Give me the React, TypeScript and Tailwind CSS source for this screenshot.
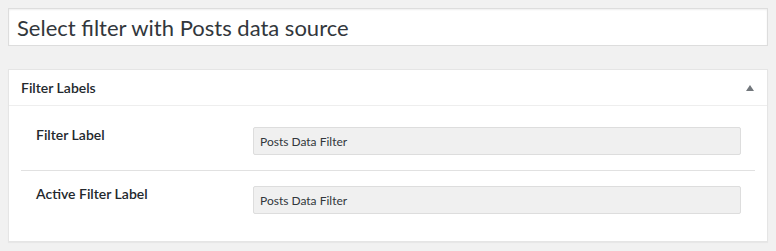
const rows = [
  { label: 'Filter Label', value: 'Posts Data Filter' },
  { label: 'Active Filter Label', value: 'Posts Data Filter' },
];

export default function App() {
  return (
    <div className="w-[776px] h-[251px] bg-[#f1f1f1] px-2 pt-2 font-['Lato',sans-serif] text-[#23282d] overflow-hidden">
      <input
        readOnly
        value="Select filter with Posts data source"
        className="block w-[760px] h-[38px] border border-[#ddd] bg-white px-2 text-[22px] text-[#32373c] outline-none shadow-[inset_0_1px_2px_rgba(0,0,0,0.07)]"
      />

      <div className="mt-[23px] w-[760px] border border-[#e5e5e5] bg-white shadow-[0_1px_1px_rgba(0,0,0,0.04)]">
        <div className="flex items-center justify-between h-[36px] px-3 border-b border-[#eee]">
          <span className="text-[14px] font-semibold">Filter Labels</span>
          <svg width="8" height="6" viewBox="0 0 8 6" className="mr-[1px]">
            <path d="M4 0 L8 6 L0 6 Z" fill="#72777c" />
          </svg>
        </div>

        <div className="px-3 pt-[6px] pb-3">
          {rows.map((r, i) => (
            <div
              key={r.label}
              className={`flex items-start py-[15px] ${i < rows.length - 1 ? 'border-b border-[#e1e1e1]' : ''}`}
            >
              <div className="w-[232px] shrink-0 pl-[15px] text-[14px] font-semibold leading-[15px]">
                {r.label}
              </div>
              <input
                readOnly
                value={r.value}
                className="w-[488px] h-[28px] border border-[#ddd] bg-[#f0f0f0] px-[6px] text-[12px] text-[#32373c] outline-none rounded-[2px]"
              />
            </div>
          ))}
        </div>
      </div>
    </div>
  );
}
